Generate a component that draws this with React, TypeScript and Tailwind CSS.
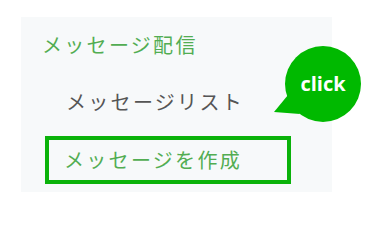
import React from 'react'

const JP = { fontFamily: '"Noto Sans CJK JP", "Noto Sans", sans-serif' }

function ClickBubble() {
  return (
    <div className="absolute left-[270px] top-[44px] w-[100px] h-[80px]">
      <svg width="100" height="80" viewBox="0 0 100 80" aria-hidden="true">
        <polygon points="4,68 18,51 30,70" fill="#00b900" />
        <circle cx="53" cy="40" r="38" fill="#00b900" />
      </svg>
      <span
        className="absolute left-[15px] top-0 w-[76px] h-[80px] flex items-center justify-center text-white font-bold text-[20px] leading-none"
        style={{ fontFamily: '"Open Sans", sans-serif' }}
      >
        click
      </span>
    </div>
  )
}

export default function App() {
  return (
    <div className="relative w-[375px] h-[211px] bg-white overflow-hidden" style={JP}>
      <div className="absolute left-[21px] top-[17px] w-[311px] h-[175px] bg-[#f7f9fa] flex flex-col">
        <p className="mt-[14px] pl-[21px] leading-[28px] text-[20px] tracking-[2.3px] text-[#52ad52]">
          メッセージ配信
        </p>
        <p className="mt-[29px] pl-[45px] leading-[28px] text-[20px] tracking-[2.3px] text-[#555555]">
          メッセージリスト
        </p>
        <div className="mt-[20px] ml-[24px] w-[246px] h-[48px] border-4 border-[#0ab20a] flex items-center pl-[15px]">
          <span className="leading-[28px] text-[20px] tracking-[2.3px] text-[#52ad52]">メッセージを作成</span>
        </div>
      </div>
      <ClickBubble />
    </div>
  )
}
